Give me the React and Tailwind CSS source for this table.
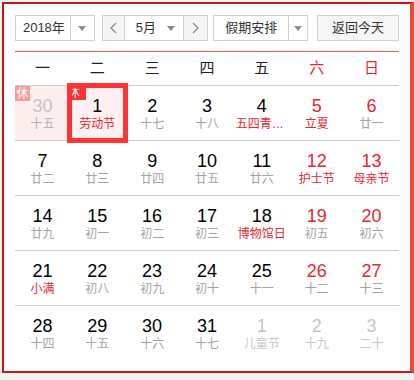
import React from 'react';

const FONT = { fontFamily: '"Liberation Sans", "Noto Sans CJK SC", sans-serif' };

const WEEK = ['一', '二', '三', '四', '五', '六', '日'];

// kind: 'prev' | 'next' for days outside May, fest = red lunar text
const ROWS = [
  [
    { d: 30, l: '十五', kind: 'prev', rest: true },
    { d: 1, l: '劳动节', fest: true, rest: true, selected: true },
    { d: 2, l: '十七' },
    { d: 3, l: '十八' },
    { d: 4, l: '五四青年节', fest: true },
    { d: 5, l: '立夏', fest: true },
    { d: 6, l: '廿一' },
  ],
  [
    { d: 7, l: '廿二' },
    { d: 8, l: '廿三' },
    { d: 9, l: '廿四' },
    { d: 10, l: '廿五' },
    { d: 11, l: '廿六' },
    { d: 12, l: '护士节', fest: true },
    { d: 13, l: '母亲节', fest: true },
  ],
  [
    { d: 14, l: '廿九' },
    { d: 15, l: '初一' },
    { d: 16, l: '初二' },
    { d: 17, l: '初三' },
    { d: 18, l: '博物馆日', fest: true },
    { d: 19, l: '初五' },
    { d: 20, l: '初六' },
  ],
  [
    { d: 21, l: '小满', fest: true },
    { d: 22, l: '初八' },
    { d: 23, l: '初九' },
    { d: 24, l: '初十' },
    { d: 25, l: '十一' },
    { d: 26, l: '十二' },
    { d: 27, l: '十三' },
  ],
  [
    { d: 28, l: '十四' },
    { d: 29, l: '十五' },
    { d: 30, l: '十六' },
    { d: 31, l: '十七' },
    { d: 1, l: '儿童节', kind: 'next' },
    { d: 2, l: '十九', kind: 'next' },
    { d: 3, l: '二十', kind: 'next' },
  ],
];

function Caret() {
  return (
    <svg width="8" height="5" viewBox="0 0 8 5">
      <polygon points="0,0 8,0 4,5" fill="#8a8a8a" />
    </svg>
  );
}

function Chevron({ dir }) {
  return (
    <svg width="7" height="12" viewBox="0 0 7 12">
      <polyline
        points={dir === 'left' ? '6,1 1,6 6,11' : '1,1 6,6 1,11'}
        fill="none"
        stroke="#8a8a8a"
        strokeWidth="1.3"
      />
    </svg>
  );
}

function DayCell({ day, col }) {
  const outside = day.kind === 'prev' || day.kind === 'next';
  const weekend = col >= 5;

  let numColor = 'text-black';
  if (outside) numColor = 'text-[#c4c4c4]';
  else if (weekend) numColor = 'text-[#e8262d]';

  let lunarColor = 'text-[#a3a3a3]';
  if (outside) lunarColor = 'text-[#c8c8c8]';
  else if (day.fest) lunarColor = 'text-[#e8262d]';
  if (day.kind === 'prev') lunarColor = 'text-[#b0b0b0]';

  let bg = '';
  if (day.kind === 'prev') bg = 'bg-[#fdeeee]';
  if (day.selected) bg = 'bg-[#fff1f1]';

  return (
    <div className={`relative h-[54px] flex flex-col items-center pt-[10px] ${bg}`}>
      {day.rest && !day.selected && (
        <span className="absolute top-0 left-0 bg-[#f59b9b] w-[15px] h-[15px] flex items-center justify-center text-[12px] leading-none text-white">
          休
        </span>
      )}
      {day.rest && day.selected && (
        <span className="absolute top-0 left-0 bg-[#ff3333] w-[16px] h-[14px] overflow-hidden flex items-center text-[12px] leading-none text-white">
          <span className="ml-[-2px]">休</span>
        </span>
      )}
      {day.selected && (
        <div className="absolute inset-[-3px] border-[5px] border-[#ff3333] pointer-events-none" />
      )}
      <div className={`text-[18px] leading-[20px] ${numColor}`}>{day.d}</div>
      <div className={`text-[12px] leading-[16px] max-w-[52px] truncate ${lunarColor}`}>{day.l}</div>
    </div>
  );
}

export default function App() {
  return (
    <div className="w-[414px] h-[380px] bg-[#f3f3f3] overflow-hidden" style={FONT}>
      <div className="ml-[2px] mt-[2px] w-[412px] h-[371px] border-2 border-[#c9161c] border-r-4 border-r-[#e6502b] bg-white px-[11px] pt-[11px]">
        {/* toolbar */}
        <div className="flex items-center h-[26px] text-[13px] text-[#333]">
          <div className="flex h-[26px] w-[80px] border border-[#cfcfcf]">
            <div className="flex-1 flex items-center justify-center pl-[2px]">2018年</div>
            <div className="w-[24px] border-l border-[#cfcfcf] flex items-center justify-center">
              <Caret />
            </div>
          </div>

          <div className="ml-[7px] flex h-[26px] w-[107px] border border-[#cfcfcf]">
            <div className="w-[22px] bg-[#f5f5f5] border-r border-[#cfcfcf] flex items-center justify-center">
              <Chevron dir="left" />
            </div>
            <div className="flex-1 flex items-center">
              <span className="ml-[11px]">5月</span>
              <span className="ml-auto mr-[8px] flex">
                <Caret />
              </span>
            </div>
            <div className="w-[24px] bg-[#f5f5f5] border-l border-[#cfcfcf] flex items-center justify-center">
              <Chevron dir="right" />
            </div>
          </div>

          <div className="ml-[5px] flex h-[26px] w-[95px] border border-[#cfcfcf]">
            <div className="flex-1 flex items-center justify-center">假期安排</div>
            <div className="w-[19px] border-l border-[#cfcfcf] flex items-center justify-center">
              <Caret />
            </div>
          </div>

          <button
            type="button"
            className="ml-[9px] h-[26px] w-[82px] border border-[#d0d0d0] bg-[#f6f6f6] flex items-center justify-center text-[13px] text-[#333]"
          >
            返回今天
          </button>
        </div>

        {/* calendar */}
        <div className="mt-[10px] border-t border-[#e55a4e]">
          <div className="grid grid-cols-7 h-[33px] items-center text-[15px]">
            {WEEK.map((w, i) => (
              <div key={w} className={`text-center ${i >= 5 ? 'text-[#e8262d]' : 'text-[#222]'}`}>
                {w}
              </div>
            ))}
          </div>

          {ROWS.map((row, ri) => (
            <div key={ri} className="grid grid-cols-7 border-t border-[#cccccc]">
              {row.map((day, ci) => (
                <DayCell key={`${ri}-${ci}`} day={day} col={ci} />
              ))}
            </div>
          ))}
        </div>
      </div>
    </div>
  );
}
